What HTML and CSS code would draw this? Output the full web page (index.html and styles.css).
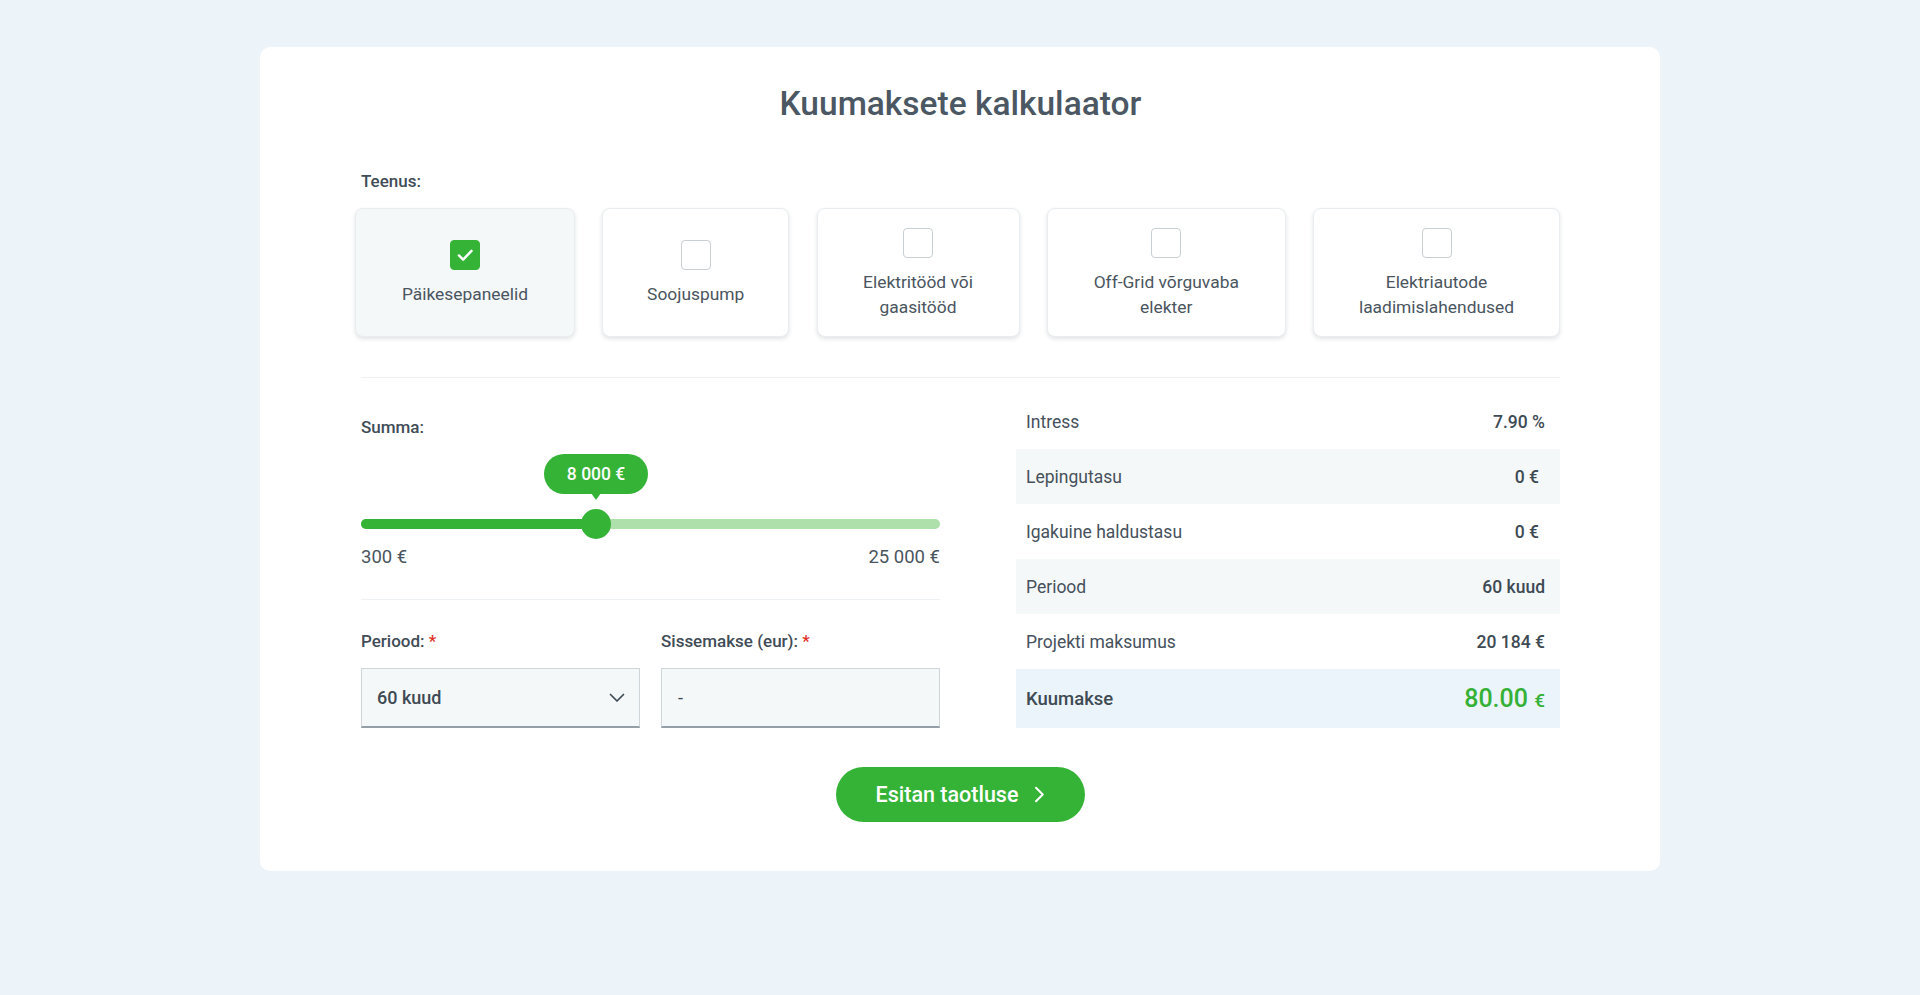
FILE: index.html
```html
<!DOCTYPE html>
<html lang="et">
<head>
<meta charset="utf-8">
<title>Kuumaksete kalkulaator</title>
<link rel="stylesheet" href="styles.css">
</head>
<body>
<main class="page">
  <section class="card">
    <h1 class="title">Kuumaksete kalkulaator</h1>

    <div class="label service-label">Teenus:</div>
    <div class="services">
      <div class="service is-selected">
        <span class="check is-checked">
          <svg width="30" height="30" viewBox="0 0 30 30"><polyline points="8.5,15.5 13,20 22,10.5" fill="none" stroke="#fff" stroke-width="2.6" stroke-linecap="round" stroke-linejoin="round"/></svg>
        </span>
        <span class="service-name">Päikesepaneelid</span>
      </div>
      <div class="service">
        <span class="check"></span>
        <span class="service-name">Soojuspump</span>
      </div>
      <div class="service">
        <span class="check"></span>
        <span class="service-name">Elektritööd või<br>gaasitööd</span>
      </div>
      <div class="service">
        <span class="check"></span>
        <span class="service-name">Off-Grid võrguvaba<br>elekter</span>
      </div>
      <div class="service">
        <span class="check"></span>
        <span class="service-name">Elektriautode<br>laadimislahendused</span>
      </div>
    </div>

    <hr class="divider">

    <div class="calc">
      <div class="calc-left">
        <div class="label">Summa:</div>
        <div class="slider">
          <div class="slider-bubble" style="left:40.6%">8 000 €</div>
          <div class="slider-track">
            <div class="slider-fill" style="width:40.6%"></div>
            <div class="slider-thumb" style="left:40.6%"></div>
          </div>
        </div>
        <div class="slider-range"><span>300 €</span><span>25 000 €</span></div>

        <hr class="divider divider-left">

        <div class="fields">
          <div class="field">
            <div class="label">Periood: <span class="req">*</span></div>
            <div class="select">
              <span>60 kuud</span>
              <svg width="16" height="10" viewBox="0 0 16 10"><path d="M1.5 1.5 L8 8 L14.5 1.5" fill="none" stroke="#3e4a54" stroke-width="1.7" stroke-linecap="round" stroke-linejoin="round"/></svg>
            </div>
          </div>
          <div class="field">
            <div class="label">Sissemakse (eur): <span class="req">*</span></div>
            <div class="input">-</div>
          </div>
        </div>
      </div>

      <div class="calc-right">
        <div class="row"><span>Intress</span><span class="val">7.90 %</span></div>
        <div class="row row-shaded"><span>Lepingutasu</span><span class="val val-inset">0 €</span></div>
        <div class="row"><span>Igakuine haldustasu</span><span class="val val-inset">0 €</span></div>
        <div class="row row-shaded"><span>Periood</span><span class="val">60 kuud</span></div>
        <div class="row"><span>Projekti maksumus</span><span class="val">20 184 €</span></div>
        <div class="row row-total"><span class="total-label">Kuumakse</span><span class="total-val">80.00 <span class="total-cur">€</span></span></div>
      </div>
    </div>

    <div class="actions">
      <button class="btn" type="button">
        <span>Esitan taotluse</span>
        <svg width="11" height="17" viewBox="0 0 11 17"><path d="M2 1.8 L8.8 8.5 L2 15.2" fill="none" stroke="#fff" stroke-width="2" stroke-linecap="round" stroke-linejoin="round"/></svg>
      </button>
    </div>
  </section>
</main>
</body>
</html>
```

FILE: styles.css
```css
* { box-sizing: border-box; }

html, body {
  margin: 0;
  padding: 0;
}

body {
  background: #ecf4fa;
  font-family: Roboto, "Open Sans", Arial, sans-serif;
  color: #434e59;
  min-height: 100vh;
}

.page {
  padding-top: 47px;
}

.card {
  width: 1400px;
  margin: 0 auto;
  background: #ffffff;
  border-radius: 10px;
  padding: 37px 100px 49px 101px;
}

.title {
  margin: 0;
  text-align: center;
  font-size: 33.5px;
  line-height: 40px;
  font-weight: 500;
  color: #4b5762;
}

.label {
  font-size: 17px;
  line-height: 20px;
  font-weight: 500;
  color: #414c57;
}

.service-label {
  margin-top: 47px;
}

.services {
  margin-top: 17px;
  margin-left: -6px;
  display: grid;
  grid-template-columns: 220px 187px 203px 239px 247px;
  justify-content: space-between;
}

.service {
  height: 129px;
  background: #ffffff;
  border: 1px solid #e9edef;
  border-radius: 8px;
  box-shadow: 0 2px 4px rgba(40, 60, 75, 0.14);
  display: flex;
  flex-direction: column;
  align-items: center;
  justify-content: center;
  padding-top: 2px;
  text-align: center;
}

.service.is-selected {
  background: #f5f8f9;
}

.check {
  width: 30px;
  height: 30px;
  border: 1px solid #c9cfd3;
  border-radius: 4px;
  background: #fff;
  display: flex;
  align-items: center;
  justify-content: center;
}

.check.is-checked {
  background: #35b337;
  border-color: #35b337;
}

.check svg { display: block; }

.service-name {
  margin-top: 12px;
  font-size: 17.4px;
  line-height: 25px;
  color: #4a5560;
}

.divider {
  margin: 40px 0 0;
  border: 0;
  height: 1px;
  background: #eef1f3;
}

.calc {
  margin-top: 16px;
  display: flex;
  justify-content: space-between;
}

.calc-left {
  width: 579px;
  padding-top: 23px;
}

.slider {
  position: relative;
  margin-top: 17px;
  padding-top: 65px;
}

.slider-bubble {
  position: absolute;
  top: 0;
  transform: translateX(-50%);
  width: 104px;
  height: 40px;
  border-radius: 20px;
  background: #35b337;
  color: #fff;
  font-size: 17.5px;
  font-weight: 500;
  line-height: 40px;
  text-align: center;
}

.slider-bubble::after {
  content: "";
  position: absolute;
  left: 50%;
  bottom: -6px;
  transform: translateX(-50%);
  border-left: 5px solid transparent;
  border-right: 5px solid transparent;
  border-top: 7px solid #35b337;
}

.slider-track {
  position: relative;
  height: 10px;
  border-radius: 5px;
  background: #aee0ac;
}

.slider-fill {
  height: 100%;
  border-radius: 5px 0 0 5px;
  background: #35b337;
}

.slider-thumb {
  position: absolute;
  top: -10px;
  width: 30px;
  height: 30px;
  border-radius: 50%;
  background: #35b337;
  transform: translateX(-50%);
}

.slider-range {
  margin-top: 18px;
  display: flex;
  justify-content: space-between;
  font-size: 18.5px;
  line-height: 20px;
  color: #4a5560;
}

.divider-left {
  margin-top: 32px;
}

.fields {
  margin-top: 31px;
  display: grid;
  grid-template-columns: 279px 279px;
  justify-content: space-between;
}

.req {
  color: #e0301e;
}

.select,
.input {
  margin-top: 17px;
  height: 60px;
  background: #f5f8f9;
  border: 1px solid #cfd6da;
  border-bottom: 2px solid #959fa8;
  display: flex;
  align-items: center;
  font-size: 18px;
  color: #3e4a54;
}

.select {
  justify-content: space-between;
  padding: 0 14px 0 15px;
  font-weight: 500;
}

.input {
  padding: 0 16px;
}

.calc-right {
  width: 544px;
}

.row {
  height: 55px;
  display: flex;
  align-items: center;
  justify-content: space-between;
  padding: 0 15px 0 10px;
  font-size: 17.5px;
  color: #46515c;
}

.row-shaded {
  background: #f5f8f9;
}

.val {
  font-weight: 500;
  color: #3e4a54;
}

.val-inset {
  margin-right: 6px;
}

.row-total {
  height: 59px;
  background: #ebf4fa;
}

.total-label {
  font-size: 18.5px;
  font-weight: 500;
  color: #3e4a54;
}

.total-val {
  font-size: 25px;
  font-weight: 500;
  color: #36b137;
}

.total-cur {
  font-size: 19px;
}

.actions {
  margin-top: 39px;
  display: flex;
  justify-content: center;
}

.btn {
  height: 55px;
  width: 249px;
  border: 0;
  border-radius: 28px;
  background: #35b337;
  color: #fff;
  font-family: Roboto, "Open Sans", Arial, sans-serif;
  font-size: 21.5px;
  font-weight: 500;
  display: flex;
  align-items: center;
  justify-content: center;
  gap: 16px;
  padding: 0;
  cursor: pointer;
}

.btn svg { display: block; }
```
